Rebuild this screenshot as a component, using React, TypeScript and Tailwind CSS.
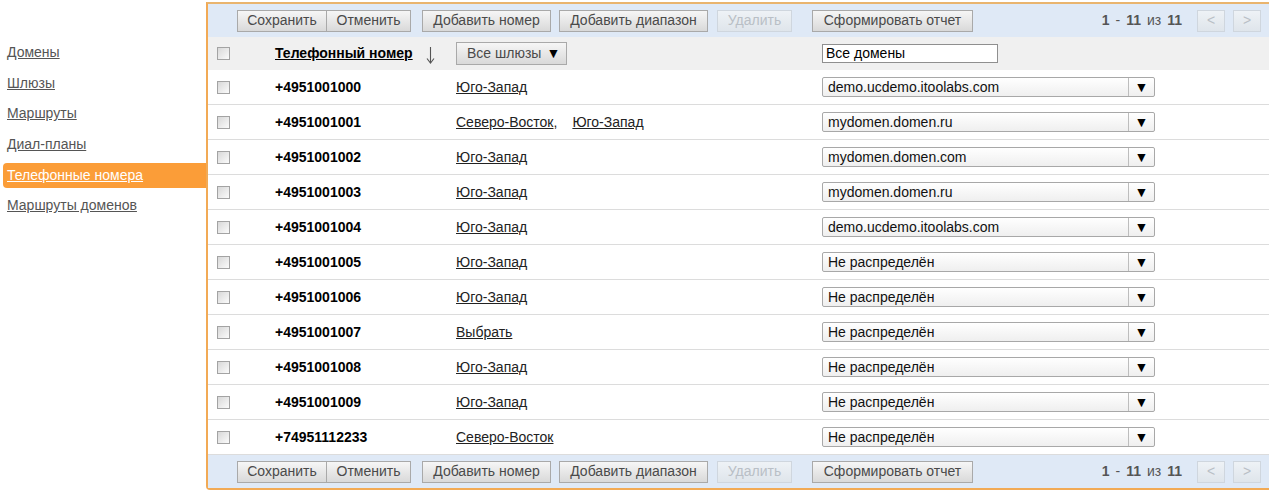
import React from "react";

const F = { fontFamily: '"Liberation Sans", Arial, sans-serif' };

const rows: { phone: string; gw: string[]; domain: string }[] = [
  { phone: "+4951001000", gw: ["Юго-Запад"], domain: "demo.ucdemo.itoolabs.com" },
  { phone: "+4951001001", gw: ["Северо-Восток", "Юго-Запад"], domain: "mydomen.domen.ru" },
  { phone: "+4951001002", gw: ["Юго-Запад"], domain: "mydomen.domen.com" },
  { phone: "+4951001003", gw: ["Юго-Запад"], domain: "mydomen.domen.ru" },
  { phone: "+4951001004", gw: ["Юго-Запад"], domain: "demo.ucdemo.itoolabs.com" },
  { phone: "+4951001005", gw: ["Юго-Запад"], domain: "Не распределён" },
  { phone: "+4951001006", gw: ["Юго-Запад"], domain: "Не распределён" },
  { phone: "+4951001007", gw: ["Выбрать"], domain: "Не распределён" },
  { phone: "+4951001008", gw: ["Юго-Запад"], domain: "Не распределён" },
  { phone: "+4951001009", gw: ["Юго-Запад"], domain: "Не распределён" },
  { phone: "+74951112233", gw: ["Северо-Восток"], domain: "Не распределён" },
];

function Btn({ w, children, disabled, cls = "" }: { w: string; children: React.ReactNode; disabled?: boolean; cls?: string }) {
  return (
    <div
      className={`${w} h-[22px] flex items-center justify-center border text-[14px] ${
        disabled
          ? "border-[#cfd6de] bg-gradient-to-b from-[#eef2f6] to-[#dfe5eb] text-[#b9bfc6]"
          : "border-[#a9a9a9] bg-gradient-to-b from-[#f6f6f6] to-[#d9d9d9] text-[#4a4a4a]"
      } ${cls}`}
    >
      {children}
    </div>
  );
}

function Toolbar() {
  return (
    <div className="h-[33px] bg-[#dfe9f6] flex items-center pl-[29px] pr-[8px]">
      <Btn w="w-[90px]">Сохранить</Btn>
      <Btn w="w-[84px]" cls="border-l-0">Отменить</Btn>
      <Btn w="w-[129px]" cls="ml-[11px]">Добавить номер</Btn>
      <Btn w="w-[149px]" cls="ml-[8px]">Добавить диапазон</Btn>
      <Btn w="w-[75px]" cls="ml-[9px]" disabled>Удалить</Btn>
      <Btn w="w-[161px]" cls="ml-[20px]">Сформировать отчет</Btn>
      <div className="flex-1" />
      <div className="text-[14px] text-[#555] mr-[15px] flex gap-[6px]">
        <b>1</b><span>-</span><b>11</b><span>из</span><b>11</b>
      </div>
      <Btn w="w-[28px]" disabled>&lt;</Btn>
      <Btn w="w-[28px]" cls="ml-[8px]" disabled>&gt;</Btn>
    </div>
  );
}

function Check() {
  return <div className="w-[13px] h-[13px] border border-[#a3a3a3] bg-gradient-to-br from-[#d8d8d8] to-[#fbfbfb]" />;
}

function Select({ value }: { value: string }) {
  return (
    <div className="w-[333px] h-[20px] border border-[#a8a8a8] rounded-[2px] bg-gradient-to-b from-[#ffffff] to-[#efefef] flex items-center">
      <div className="flex-1 pl-[5px] text-[14px] text-[#111] leading-none">{value}</div>
      <div className="w-[26px] h-full border-l border-[#bdbdbd] flex items-center justify-center text-[14px] text-black">▼</div>
    </div>
  );
}

export default function App() {
  const side = ["Домены", "Шлюзы", "Маршруты", "Диал-планы", "Телефонные номера", "Маршруты доменов"];
  return (
    <div className="w-[1269px] h-[491px] bg-white flex overflow-hidden" style={F}>
      <div className="w-[206px] shrink-0 pt-[37.5px] pl-[3px]">
        {side.map((s, i) => (
          <div key={s} className="h-[30.6px] flex items-center">
            <div
              className={`w-full h-[25px] flex items-center pl-[4px] text-[14px] underline ${
                i === 4 ? "bg-[#fb9d38] text-white rounded-l-[4px]" : "text-[#555]"
              }`}
            >
              {s}
            </div>
          </div>
        ))}
      </div>
      <div className="flex-1 mt-[2px] h-[488px] border-2 border-r-0 border-[#f2aa55] border-t-[#e9b46e] rounded-bl-[4px] flex flex-col">
        <Toolbar />
        <div className="h-[33px] bg-[#f0f0f0] grid grid-cols-[67px_181px_366px_1fr] items-center">
          <div className="pl-[9px]"><Check /></div>
          <div className="flex items-center">
            <span className="text-[14px] font-bold underline text-black">Телефонный номер</span>
            <svg className="ml-[13px] mt-[3px]" width="9" height="18" viewBox="0 0 9 18">
              <path d="M4.5 1 V16.5" stroke="#555" strokeWidth="1.1" fill="none" />
              <path d="M1 12.5 L4.5 17 L8 12.5" stroke="#555" strokeWidth="1.1" fill="none" />
            </svg>
          </div>
          <div>
            <div className="w-[111px] h-[23px] border border-[#a9a9a9] bg-gradient-to-b from-[#f6f6f6] to-[#d9d9d9] flex items-center pl-[10px] text-[14px] text-[#4a4a4a]">
              Все шлюзы <span className="ml-[5px] text-[14px] text-black">▼</span>
            </div>
          </div>
          <div>
            <div className="w-[176px] h-[19px] border border-[#8f8f8f] bg-white flex items-center pl-[3px] text-[14px] text-black">
              Все домены
            </div>
          </div>
        </div>
        {rows.map((r) => (
          <div key={r.phone} className="h-[35px] shrink-0 border-b border-[#dcdcdc] bg-white grid grid-cols-[67px_181px_366px_1fr] items-center">
            <div className="pl-[9px]"><Check /></div>
            <div className="text-[14px] font-bold text-black">{r.phone}</div>
            <div className="text-[14px] text-[#222] flex">
              {r.gw.map((g, i) => (
                <span key={g}>
                  <span className="underline">{g}</span>
                  {i < r.gw.length - 1 && <span className="mr-[15px]">,</span>}
                </span>
              ))}
            </div>
            <div><Select value={r.domain} /></div>
          </div>
        ))}
        <Toolbar />
      </div>
    </div>
  );
}
